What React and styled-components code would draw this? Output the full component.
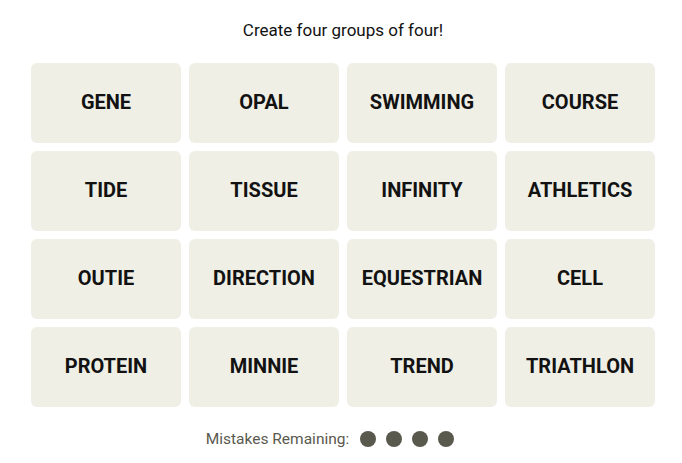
import React from "react";
import styled, { createGlobalStyle } from "styled-components";

const words = [
  "GENE", "OPAL", "SWIMMING", "COURSE",
  "TIDE", "TISSUE", "INFINITY", "ATHLETICS",
  "OUTIE", "DIRECTION", "EQUESTRIAN", "CELL",
  "PROTEIN", "MINNIE", "TREND", "TRIATHLON",
];

const GlobalStyle = createGlobalStyle`
  body {
    margin: 0;
    background: #ffffff;
    font-family: "Roboto", "Liberation Sans", sans-serif;
  }
`;

const Page = styled.main`
  width: 682px;
  padding-left: 4px;
  box-sizing: border-box;
  display: flex;
  flex-direction: column;
  align-items: center;
`;

const Prompt = styled.p`
  margin: 19px 0 0;
  height: 22px;
  font-size: 17px;
  line-height: 22px;
  color: #121212;
`;

const Board = styled.section`
  margin-top: 22px;
  display: grid;
  grid-template-columns: repeat(4, 150px);
  grid-auto-rows: 80px;
  gap: 8px;
`;

const Tile = styled.button`
  border: none;
  border-radius: 6px;
  background: #efefe6;
  color: #121212;
  font-family: inherit;
  font-weight: 700;
  font-size: 20px;
  display: flex;
  align-items: center;
  justify-content: center;
  padding: 0 0 2px;
`;

const Mistakes = styled.div`
  margin-top: 23px;
  padding-right: 26px;
  display: flex;
  align-items: center;
  gap: 10px;
  font-size: 15.5px;
  color: #5a594e;
`;

const Label = styled.span`
  margin-right: 1px;
`;

const Dot = styled.span`
  width: 16px;
  height: 16px;
  border-radius: 50%;
  background: #5a594e;
`;

export default function App() {
  return (
    <>
      <GlobalStyle />
      <Page>
        <Prompt>Create four groups of four!</Prompt>
        <Board>
          {words.map((w) => (
            <Tile key={w}>{w}</Tile>
          ))}
        </Board>
        <Mistakes>
          <Label>Mistakes Remaining:</Label>
          <Dot />
          <Dot />
          <Dot />
          <Dot />
        </Mistakes>
      </Page>
    </>
  );
}
